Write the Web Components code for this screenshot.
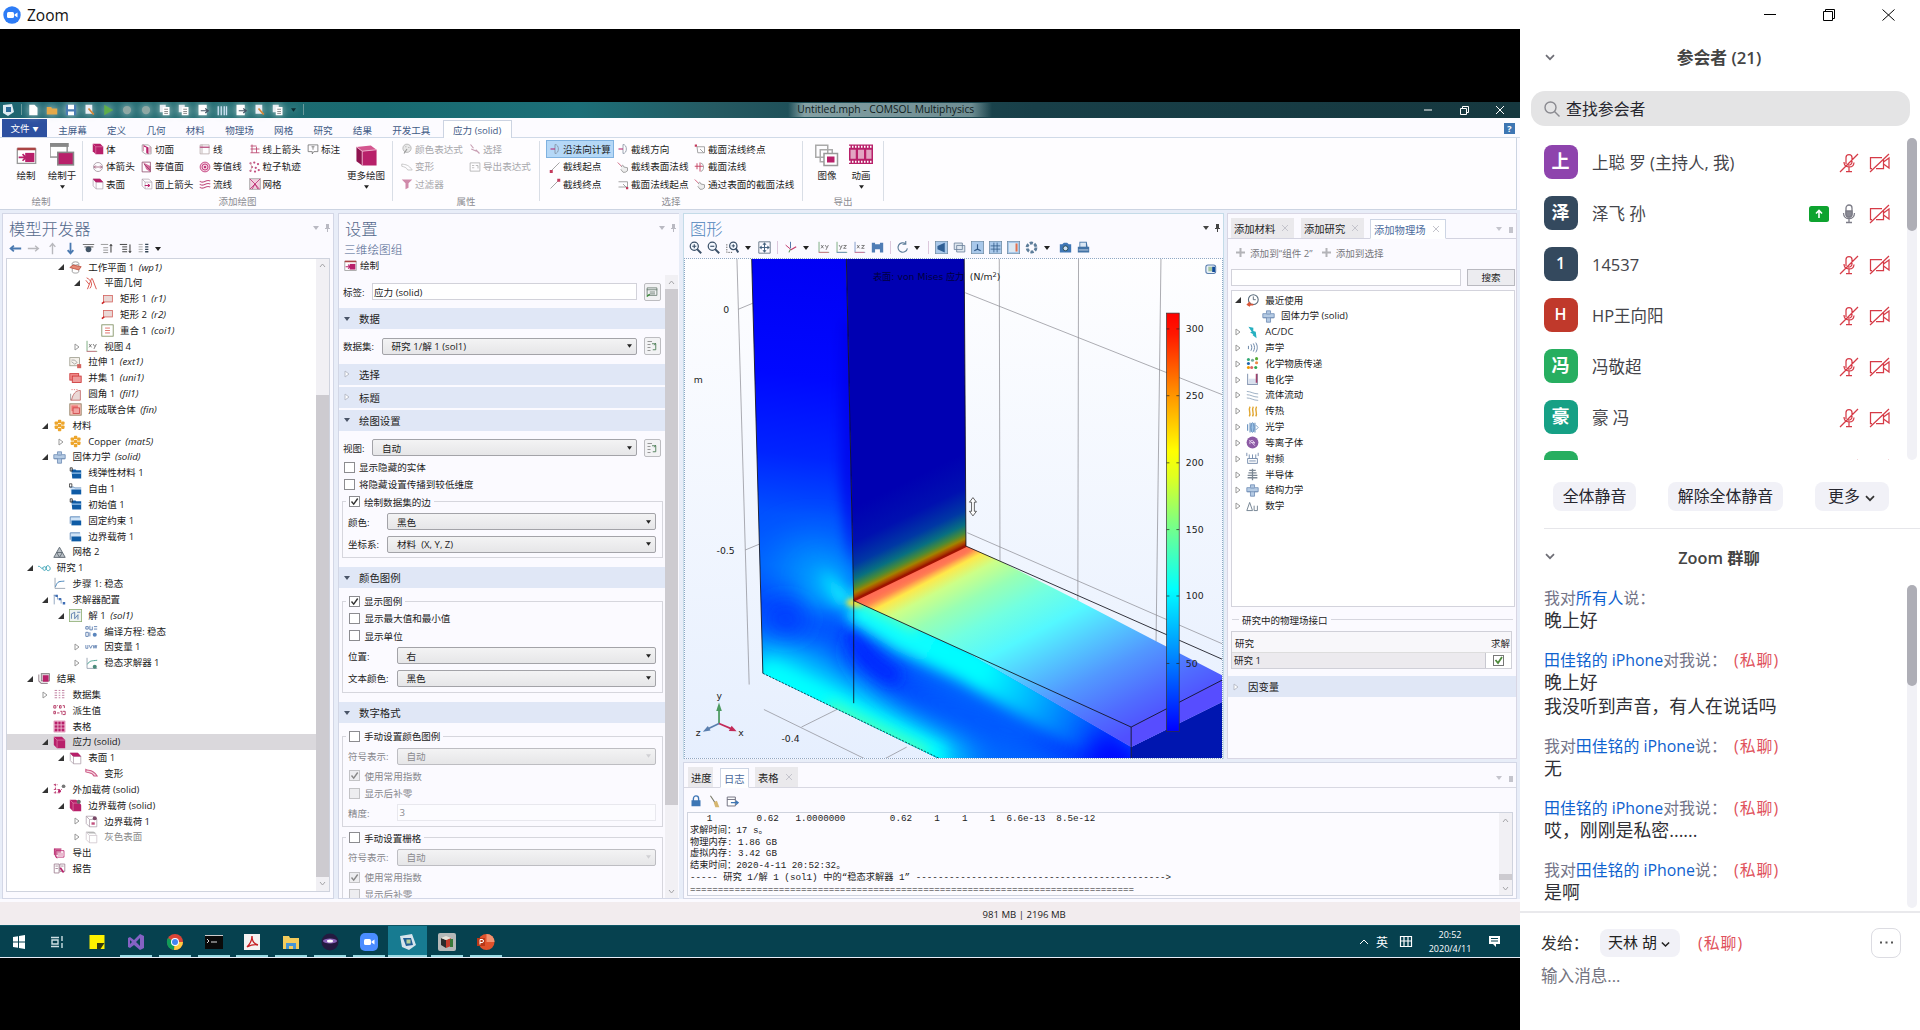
<!DOCTYPE html>
<html lang="zh-CN">
<head>
<meta charset="utf-8">
<title>Zoom</title>
<style>
html,body{margin:0;padding:0;width:1920px;height:1030px;overflow:hidden;background:#fff}
body{font-family:"Open Sans","Noto Sans CJK SC",sans-serif;color:#222}
</style>
</head>
<body>
<zoom-window></zoom-window>
<script>
const M='#b8206a', R='#d06060', B='#3f6fa8', G='#8a8a94';
const P=(d,s=M,w=1,f='none',x='')=>`<path d="${d}" stroke="${s}" stroke-width="${w}" fill="${f}" ${x}/>`;
const F=(d,f=M)=>`<path d="${d}" fill="${f}"/>`;
const CUBE=F('M1 1h10l4 4v10H5L1 11z')+P('M1.5 1.5L5 5h10M5 5v10','#e48ab4',.8);
const BOX=P('M1.5 1.5h9l4 4v9h-9l-4-4zM1.5 1.5l4 4h9M5.5 5.5v9','#a89aa6',.9);
const FOLD='M1 5h5l1 1h8v8H3z';
const SOLID='<path d="M5.500 1h5v3.500H15v5h-4.500V15h-5V9.500H1v-5h4.500z" fill="#b5cbe4" stroke="#6f8db5"/><path d="M1.500 9.500h13M5.500 5h5" stroke="#6f8db5" fill="none"/>';
const MAT=[[3,3],[7,1],[11,3],[3,8],[7,6],[11,8],[7,11]].map(p=>`<rect x="${p[0]-1}" y="${p[1]}" width="4.200" height="4.200" rx="1" fill="#eda52b"/>`).join('');
const ON='<rect x="0" y="0" width="16" height="16" rx="1" fill="#a9c8ea" stroke="#6a8296" stroke-width="1.500"/>';
const ICON={
 wp:P('M4 3v10c0 2.500 8 2.500 8 0V3','#8b8b8b')+'<ellipse cx="8" cy="3" rx="4" ry="2" fill="#fff" stroke="#8b8b8b"/>'+F('M1 8l4-3 10 2-3 4z','#e38a77')+P('M1 8l4-3 10 2-3 4z','#c24f3d'),
 geo:P('M1 4l4 5M3 15L8 2l1 0 5 13M2 1c6 3 8 8 4 13','#d9574f',1.2),
 rect:'<rect x="3" y="3" width="11" height="8" fill="#ead8d6" stroke="#d4645f"/>'+P('M1 13l3-2','#c22',2),
 coin:'<rect x="1" y="1" width="14" height="14" fill="#fff" stroke="#7a8a5a"/>'+P('M5 5h6M5 8h6M5 11h6','#d9574f'),
 xy:P('M2.500 1v13H15','#66a06a')+P('M2 14h12','#d9708a')+P('M5 5l3 4M8 5L5 9M10 5l2 3M14 5l-3 6','#555',.9),
 yz:P('M2.500 1v13H15','#66a06a')+P('M2 14h12','#6a8ac0')+P('M5 5l2 3M9 5l-3 6M10.500 5.500H14L10.500 9H14','#555',.9),
 xz:P('M2.500 1v13H15','#6a8ac0')+P('M2 14h12','#d9708a')+P('M5 5l3 4M8 5L5 9M10.500 5.500H14L10.500 9H14','#555',.9),
 ext:'<rect x="1" y="2" width="12" height="10" fill="#f6f2ec" stroke="#9a9a8a"/>'+P('M3 5h4l3 3-3 2-4-3','#888',.8)+F('M10 10h5v5h-5z','#d4645f'),
 uni:'<rect x="1" y="2" width="11" height="8" fill="#f08b8b" stroke="#c33"/><rect x="4" y="5" width="11" height="8" fill="#ee9a9a" stroke="#c33"/>',
 fil:P('M2 15V7','#8a8a8a')+F('M3 15C5 7 8 3 14 3v12z','#ead8d6')+P('M3 15C5 7 8 3 14 3v12H2','#b55',.9)+P('M3 2l8 0','#d66',1,'none','stroke-dasharray="1.500 1.500"'),
 fin:'<rect x="1" y="1" width="14" height="14" fill="#f6c0b8" stroke="#8a7a5a"/><rect x="3" y="3" width="8" height="7" fill="#e77"/><rect x="5" y="6" width="8" height="7" fill="#f2a2a2" stroke="#c44"/>',
 mat:MAT, solid:SOLID,
 fd:F('M3 3h5l1 1h6v10H4z','#0e5ba5')+P('M3 7.500h12','#bfe0ff',1.2)+P('M1.500 1v4h2.500V1z','#222'),
 fb:F(FOLD,'#d5e6f8')+F('M3 8h12v6H3z','#0e5ba5')+P('M1 5h5l1 1h8','#5a87b8')+P('M.500 1v4h3V1z','#333'),
 fo:F('M2 3h12v6H2z','#cfe3f7')+F('M3 8h12v6H3z','#0e5ba5')+P('M1.500 12V3.500h12','#4a7ab0'),
 mesh:P('M8 1.500L15 14H1zM4.500 8h7L8 14z','#666f78',1.2,'#b9c0c6'),
 study:P('M0 6c2-3 4 4 6 1M6 8c0-3 4-3 4 0s-4 3-4 0M10 8c0-6 5-3 5 0s-4 4-5 0','#36a0b4',1.2),
 step:P('M2.500 1v13H15','#8b98a8')+P('M3 12c3-8 5-6 11-7','#4382b8',1.2),
 cfg:P('M1.500 2v12M1 3h4M5.500 4v4M7 7h3v6','#7f97b5')+F('M3 2h3v3H3zM7 6h3v3H7zM12 11h3v3h-3z','#3d6db5'),
 sol:'<rect x=".500" y=".500" width="15" height="15" fill="#eef3f0" stroke="#8fae74"/>'+P('M3 12V6l4-2v8l4-5v6M10 4h4','#4a6fa6'),
 eq:P('M1 2h3v3H1zM6 1v5h3V2M11 2h4M11 5h4M1 9h3v5H1zM6 9v5','#4a6fa6')+'<circle cx="12" cy="12" r="2.500" fill="#5b86bd"/>',
 uvw:P('M1 5v4h2.500V5M5 5l2 4 2-4M10 5l1 4 1.500-4 1 4 1-4','#4a6fa6',.9),
 ssol:P('M2.500 1v13H15','#8b98a8')+P('M3 9c3-5 5-4 12-5','#3f9a8a',1.1)+'<circle cx="12" cy="12" r="2.500" fill="#4a8a7a"/>',
 res:P('M1 3v8l3 3h8','#9a8a94',1.3)+'<rect x="4" y="2" width="10" height="9" fill="#d9c6d0" stroke="#777"/>'+F('M6 4h7v8H6z'),
 data:P('M2 3h3M2 6h3M2 9h3M2 12h3M7 3h2M7 6h2M7 9h2M7 12h2M11 3h3M11 6h3M11 9h3M11 12h3','#c080a0',1.2),
 num:P('M1 2h2.500v3H1zM5 2h1M8 2h2v3H8zM12 2h2v3M1 9h2v3H1zM5 11h3M9 9h2v4M12 9h3v4h-3','#b8406a',1.2),
 table:F('M1 1h14v14H1z')+P('M1.500 1.500v13h13v-13zM1 6h14M1 10h14M6 1v14M10 1v14','#f3c3d8',1),
 cube:CUBE,
 surf:BOX+F('M1 1h10l4 4.500H5z'),
 def:P('M1 3c4 2 8-1 14 8l-4 0C9 6 5 8 1 6z','#cc5a85',1.3,'#f7d7e3'),
 load:P('M1 2h5M1 8h10M3 1v12M1 12h8','#c2507f',1.3,'none','stroke-dasharray="3 1.500"')+'<circle cx="13" cy="4" r="2.300" fill="#777"/><circle cx="8" cy="10" r="1.800" fill="#b8206a"/>',
 bload:CUBE+'<path d="M8 0h8v8z" fill="#fff"/><circle cx="12" cy="3.500" r="2.500" fill="#666"/>',
 bl1:BOX+'<circle cx="12" cy="4" r="2.500" fill="#7a4a68"/><rect x="8" y="9" width="4" height="3" fill="#c2507f"/>',
 gload:'<g opacity=".6">'+BOX+F('M1 1h10l3 2H5z','#888')+'</g>',
 exp:F('M1 2h9v8H1z','#d88aae')+P('M3.500 4.500h10v8h-10zM1.500 2.500h9M2 2v7l3 5','#b8206a')+F('M6 7h7v4H6z','#e9b9ce'),
 rep:P('M1.500 2.500h6v11h-6zM8.500 2.500h6v9h-6zM3 5h3M3 8h3M10 5h3','#9a7a8c')+P('M9 7l4 6','#b8206a',2),
 draw:'<rect x="1" y="3" width="14" height="11" fill="#fff" stroke="#999"/>'+F('M1 2h14v2H1z','#a44')+F('M7 6h7v7H7z')+P('M2 9.500h5M5 7l2.500 2.500L5 12',M,1.3),
 drawto:'<rect x="0" y="1" width="11" height="8" fill="#fff" stroke="#999"/>'+F('M0 0h12v2.500H0z','#888')+'<rect x="5" y="6" width="10" height="8" fill="#b8206a" stroke="#888"/>',
 slice:P('M1.500 2.500h8l4 3v9h-8l-4-3z','#999')+F('M4 3l6 3v9l-3-2V6l-3-1z')+P('M3 2v9M12 5v8','#c2507f'),
 line:P('M1.500 2.500h12v12h-12zM4 2v12M2 6h12','#a99',.9)+P('M1 5.500h13','#b8206a',1.2),
 larrow:P('M2 4h8M2 8h12M2 13h12M4 2v11M10 5v8','#b8406a',1.1),
 ann:P('M1.500 2.500h13v9H9l-2 3v-3H1.500zM6 5h4M8 5v4','#666'),
 varrow:'<circle cx="8" cy="8" r="6" fill="none" stroke="#9a8a94"/>'+P('M3 8h10M5 6L3 8l2 2M11 6l2 2-2 2','#a05a7a',1.1),
 iso:F('M3 2l10 5v8l-6-4z','#d76c9c')+P('M1.500 1.500h11v13h-11zM4 4l8 8','#884466'),
 contour:'<circle cx="8" cy="8" r="6.500" fill="#f3cfdf" stroke="#b8206a"/><circle cx="8" cy="8" r="4" fill="none" stroke="#b8206a"/><circle cx="8" cy="8" r="1.500" fill="#b8206a"/>',
 part:[[2,3],[7,2],[12,4],[4,8],[9,9],[2,13],[8,14],[13,12]].map(p=>`<circle cx="${p[0]}" cy="${p[1]}" r="1.500" fill="#c2507f"/>`).join('')+P('M2 3l2 5-2 5','#caa'),
 sarrow:BOX+P('M5 10h7M9 8l3 2-3 2',M,1.3),
 stream:P('M1 4c4 5 8-3 14 0M1 8c4 5 8-3 14 0M1 12c4 5 8-3 14 0','#c2507f',1.4),
 gmesh:'<rect x="1" y="1" width="14" height="14" fill="#f0d0de" stroke="#999"/>'+P('M1 1l7 7 7-7M8 8l-7 7M8 8l6 7M4 15l4-7 4 7',M),
 pal:'<circle cx="8" cy="7" r="5.500" fill="#e8e8e8" stroke="#aaa"/>'+P('M6 5h1M10 6h1M4 14l4-6','#999',1.5),
 sel:P('M2 2l4 5M3 8l7 3M9 9l5 5','#c9a0b4',1.6), defg:P('M1 4c6 1 9 1 14 8H9C7 8 4 8 1 7z','#bbb'),
 oute:P('M1.500 2.500h13v11h-13zM4 6h3M4 9h3M9 6h3v4','#aaa'),
 filt:F('M1 2h14l-5 5v6l-4 2V7z','#d08aaa'),
 nrm:P('M8 2c6 0 6 12 0 12M8 2v12','#7d8a9a')+P('M2 8h6',M,1.4),
 l1:P('M3 13L14 2','#888')+F('M1 12h4v4H1z','#c33a5c'), l2:P('M2 14L13 3','#888')+F('M11 1h4v4h-4z','#c33a5c'),
 hand:P('M1 2l7 7','#c33a5c')+P('M6 8c0-3 3-3 3 0l5 1v4l-3 2H8l-3-4','#888',1,'#eee'),
 pl:P('M2 5h12v7H2M8 8l5 5','#888')+F('M12 12h3v3h-3z','#c33a5c'), pl2:P('M4 5h10v8H5zM8 8l5 5','#888')+F('M1 2h3v3H1z','#c33a5c'),
 cn:P('M9 3c5 0 5 10 0 11','#888')+P('M1 7h11M4 3v8M8 2v12','#c33a5c',1.2),
 more:F('M1 2l10-1 4 3-10 1z','#d4568f')+F('M1 2l4 3v10l-4-3z','#8f1450')+F('M5 5l10-1v11H5z')+P('M1 2l4 3 10-1M5 5v10','#f0b6d0',.6),
 img:P('M.500 1.500h8v8h-8zM3.500 4.500h8v8h-8z','#aaa')+'<rect x="6" y="7" width="9" height="8" fill="#fff" stroke="#999"/>'+F('M8 9h5v4H8z'),
 film:F('M0 1h16v13H0z')+P('M0 2.500h16M0 12.500h16','#fff',1.3,'none','stroke-dasharray="1 1"')+F('M1 4.500h3.500v6H1zM6 4.500h4v6H6zM11.500 4.500H15v6h-3.500z','#e2a5c2'),
 al:P('M15 8H2M6 4.500L2 8l4 3.500','#4a79b0',2.2), ar:P('M1 8h13M10 4.500L14 8l-4 3.500','#b8b8bd',1.7),
 au:P('M8 15V2M4.500 6L8 2l3.500 4','#b8b8bd',1.7), ad:P('M8 1v13M4.500 10L8 14l3.500-4','#4a79b0',2.2),
 eye:P('M1 3h14M3 6h11','#777',1.3)+'<circle cx="8" cy="9" r="3.500" fill="#456"/>',
 lu:P('M1 3h9M4 7h6M4 10h6M4 13h6','#888')+P('M13.500 13V3M12 5l1.500-2L15 5','#333',1.2),
 ld:P('M1 3h9M4 6h6M4 9h6M4 12h6','#444',1.2)+P('M13.500 3v10M12 11l1.500 2 1.500-2','#333',1.2),
 cols:P('M2 3h5M2 6h5M2 9h5M2 12h5','#aaa',1.2)+P('M10 3h4M10 6h4M10 9h4M10 12h4','#345',1.6),
 zi:'<circle cx="6.500" cy="6.500" r="5" fill="#f4f8ff" stroke="#3a4f68" stroke-width="1.500"/>'+P('M10 10l5 5','#3a4f68',2.4)+P('M4 6.500h5M6.500 4v5','#3a4f68',1.4),
 zo:'<circle cx="6.500" cy="6.500" r="5" fill="#f4f8ff" stroke="#3a4f68" stroke-width="1.500"/>'+P('M10 10l5 5','#3a4f68',2.4)+P('M4 6.500h5','#3a4f68',1.4),
 zb:P('M1 4v10h8','#555',1.2,'none','stroke-dasharray="1.500 1.500"')+'<circle cx="9" cy="6" r="4.500" fill="#f4f8ff" stroke="#3a4f68" stroke-width="1.500"/>'+P('M12 9l3 5','#3a4f68',2.4)+P('M7 6h4M9 4v4','#3a4f68',1.2),
 ze:P('M1 1h14v14H1z','#6d7c8c',1.2)+P('M8 3v10M3 8h10','#44617e',1.2)+F('M8 1.500l2.500 3h-5zM8 14.500l2.500-3h-5zM1.500 8l3-2.500v5zM14.500 8l-3-2.500v5z','#44617e'),
 ax:P('M8 9V1','#5577aa',1.3)+P('M8 10l-6-5','#c33a6c',1.2)+P('M8 11l7-4','#c33a6c',1.4)+P('M8 10l-2 4','#5a9a5a',1.3),
 cyl:F('M1 2h4v12H1zM11 2h4v12h-4zM5 4h6v6H5z','#4f7db5'),
 rot:P('M12 3.500A5.800 5.800 0 1 0 14 9M12 0v4H8','#5d7d9a',1.4),
 spk:ON+F('M3 6l9-4v12L3 10z','#2f5f95'), trans:P('M1.500 2.500h10v8h-10zM4.500 5.500h10v8h-10z','#6a7f9a',1,'#dfe7f0'),
 axa:ON+P('M8 10V4M8 10l-4 2M8 10l4 2','#345c8a',1.4), grid:ON+P('M2 6h12M2 10h12M6 2v12M10 2v12','#345c8a'),
 leg:ON+F('M2.500 2.500h11v11h-11z','#dde9f4')+F('M10.500 3h2.500v10h-2.500z','#e07050'),
 ref:'<circle cx="8" cy="8" r="5.500" fill="none" stroke="#5d7d9a" stroke-width="3.500" stroke-dasharray="4 1.760"/>',
 cam:F('M1 4h3l2-2h4l2 2h3v10H1z','#3f76b5')+'<circle cx="8" cy="9" r="3" fill="#cfe0f2" stroke="#244"/>',
 prn:F('M3 1h9l1 6h2v7H1V7h2z','#4373a6')+F('M4 2h7v5H4z','#dce8f4')+P('M2 11h12','#dce8f4'),
 clock:'<circle cx="9" cy="7" r="6" fill="#fff" stroke="#556878" stroke-width="1.300"/>'+P('M9 3v4h3','#456')+P('M9 13H2M5 10l-3 3 3 2','#d9573a',2),
 acdc:F('M3 1l6 1 0 4 3 1 1 8-5-4 1-1-4-2 2-1z','#26b0c0'),
 snd:P('M3 6v4M6 4c1.500 3 1.500 5 0 8M9 3c2 4 2 6 0 10M12 2c2.500 4 2.500 8 0 12','#6a86a8',1.2),
 chem:[[3,3,'#3a7'],[8,4,'#7a9'],[13,2,'#5a3'],[13,7,'#e84'],[3,8,'#26a'],[7,13,'#d66'],[3,13,'#e90'],[12,13,'#3a5']].map(p=>`<circle cx="${p[0]}" cy="${p[1]}" r="1.900" fill="${p[2]}"/>`).join(''),
 elec:P('M2 1v13h12V1','#8a9ab5',1.3)+F('M3 7h10v6H3z','#d8e0ee')+P('M13 1v11','#a0406a',2),
 flow:P('M1 3c5 0 8 3 14 3M1 7c5 0 8 3 14 3M1 11c5 0 8 3 14 3','#8aa0b8'),
 heat:P('M4 14c3-4-2-7 1-12M8 14c3-4-2-7 1-12M12 14c3-4-2-7 1-12','#e0a52e',1.7),
 opt:P('M2 4v8M5 2v12M11 2v12','#6a94c0',1.4)+'<ellipse cx="8" cy="8" rx="2" ry="6" fill="#9ec3e6" stroke="#4a7ab0"/>'+P('M12 5l3 3-3 3','#6a94c0'),
 plas:'<circle cx="8" cy="8" r="7.300" fill="#8c5aa4"/>'+P('M5 10c-2-6 6-6 5 0M6 8h5M4 5l7 7','#e5d2ee',1.1),
 rf:P('M2 8h12v6H2zM4 8V3M8 8V3M12 8V3M1 1v4M15 1v4M4 11h8','#6f87a8',1.1),
 semi:P('M2 9h12M2 12h12M8 1v14M4 3h8M3 6h10','#7b8794',1.6),
 math:P('M1 13L4.500 3 8 13z','#6a7a8a',1.1)+P('M10 7v6h4V7','#6a7a8a',1.1),
 lock:F('M2 7h12v8H2z','#3d76b5')+P('M4.500 8V5c0-5 7-5 7 0v3','#3d76b5',1.8), broom:P('M3 1l6 9','#776',1.3)+F('M7 9l4-2 3 8H9z','#d6b670'),
 outp:P('M1.500 2.500h10v11h-10zM1.500 5.500h10','#667',1.1,'#fff')+P('M6 9.500h9M12 7l3 2.500-3 2.500','#3d76b5',1.5),
 lab:P('M1.500 2.500h13v10h-13zM1 5h14M5 8h7M5 10.500h7','#586f62',1)+P('M1 14l4-3','#3a8a3a',2),
 go:P('M2 2h6M2 6h4M2 10h4M2 14h4','#777')+P('M8 5h5v8H9M11 7l2-3','#4c7c56',1.2),
 newf:F('M3 1h7l4 4v10H3z','#fff'), open:F('M1 4h6l1 2h7v8H1z','#e5a94a'), save:F('M1 1h14v14H1z','#4b7cb3')+F('M4 1h8v6H4zM4 10h8v5H4z','#fff'),
 savea:F('M2 1h9v12H2z','#e9eef5')+P('M6 6l7 8','#d9893a',2.5), run:F('M3 1l12 7-12 7z','#5fae4a'), dot:'<circle cx="8" cy="8" r="5.500" fill="#8fa8a4"/>',
 copy:F('M1 1h8v10H1z','#e8eef2')+F('M5 4h9v11H5z','#fff')+P('M7 7h5M7 10h5M7 12.500h5','#666'), arrw:F('M2 1h11v14H2z','#fff')+P('M5 9h10M11 6l4 3-4 3','#456',1.6),
 del:P('M3 3v12M7 3v12M11 3v12M14 3v12','#cde3f5',1.8)
};
const svg=(n,w=12.5,h=w)=>`<svg width="${w}" height="${h}" viewBox="0 0 16 16" style="display:block;flex:none">${ICON[n]||''}</svg>`;
const BASE=`*{box-sizing:border-box}:host{display:block}.r{display:flex;align-items:center}`;
function define(tag,fn){
 customElements.define(tag,class extends HTMLElement{
  connectedCallback(){ if(this.shadowRoot) return;
   const s=this.attachShadow({mode:'open'});const t=document.createElement('template');
   t.innerHTML=fn(this,(k,d='')=>this.getAttribute(k)??d);
   s.appendChild(t.content.cloneNode(true)); }
 });
}
const st=c=>`<style>${BASE}${c}</style>`;
const caret=(c='#222',w=6)=>`<svg width="${w}" height="4" viewBox="0 0 6 4" style="display:block;flex:none"><path d="M0 0h6L3 4z" fill="${c}"/></svg>`;

define('tree-row',(e,a)=>{
 const L=+a('level'),o=a('open'),x=88.3+(L-3)*15.83-7-30;
 const g=o==='1'?'<svg width="6" height="6" viewBox="0 0 6 6"><path d="M6 0v6H0z" fill="#333"/></svg>':o==='0'?'<svg width="6" height="8" viewBox="0 0 6 8"><path d="M1 1l4 3-4 3z" fill="#fff" stroke="#999"/></svg>':'';
 return st(`:host{height:15.834px;${a('sel')?'background:#dad8dc;':''}font-size:9.5px;line-height:15.800px;color:${a('dim')?'#8b8b8b':'#1a1a1a'};white-space:pre}
 .r{height:100%;padding-left:${+a('pad',0)+x}px}.a{width:9.500px;display:flex;align-items:center}.i{width:20.500px;padding-left:1.500px}::slotted(i){font-size:9.700px;margin-left:2px}`)+
 `<div class="r"><span class="a">${g}</span><span class="i">${svg(a('icon'),13)}</span><span><slot></slot></span></div>`;
});
define('scroll-bar',(e,a)=>{
 const c=d=>`<svg width="7" height="5" viewBox="0 0 7 5"><path d="${d}" fill="none" stroke="#a5a5a8"/></svg>`;
 return st(`:host{width:13px;flex:none;background:#f1f0f4}.w{height:100%;display:flex;flex-direction:column;align-items:center}.b{height:14px;display:flex;align-items:center}.t{width:13px;background:#cdcbd0;height:${a('size')}px;margin-top:${a('off',0)}px}.s{flex:1}`)+
 `<div class="w"><div class="b">${c('M1 4l2.500-3L6 4')}</div><div class="t"></div><div class="s"></div><div class="b">${c('M1 1l2.500 3L6 1')}</div></div>`;
});
define('panel-title',(e,a)=>st(`:host{height:29px;font-size:16.300px;color:${a('color','#54698c')};font-weight:300}.r{height:28.500px;padding:0 3px 0 ${a('pad','7')}px;justify-content:space-between}.p{display:flex;gap:6.500px;align-items:center}`)+
 `<div class="r"><span><slot></slot></span><span class="p">${caret(a('c','#b9b9c2'))}<svg width="5" height="8" viewBox="0 0 5 8"><path d="M1 0h3v4h1v1H0V4h1zM2 5h1v3H2z" fill="${a('c','#b9b9c2')}"/></svg></span></div>`);
define('section-head',(e,a)=>st(`:host{height:21px;background:#e0e7f6;margin-top:${a('mt','0')}px;font-size:10.400px;color:#222}.r{height:21px;padding-left:5px;gap:9px}.z{width:6px;display:flex}`)+
 `<div class="r"><span class="z">${a('open')?caret('#4a5568'):'<svg width="6" height="8" viewBox="0 0 6 8"><path d="M1 1l4 3-4 3z" fill="#fff" stroke="#b8bcc8"/></svg>'}</span><span><slot></slot></span></div>`);
define('combo-box',(e,a)=>st(`:host{flex:1;height:17px;font-size:9.600px}.r{height:17px;border:1px solid ${a('dim')?'#bdbdc2':'#a3a3a8'};border-radius:2px;background:linear-gradient(#f3f3f4,#e6e6e8);padding:0 4px 0 9px;justify-content:space-between;color:${a('dim')?'#8a8a8e':'#222'}}span{white-space:pre}`)+
 `<div class="r"><span><slot></slot></span>${caret(a('dim')?'#d0d0d4':'#222',5)}</div>`);
define('text-box',(e,a)=>st(`:host{flex:1;height:17px;font-size:9.600px}.r{height:17px;border:1px solid ${a('dim')?'#e8e8ee':'#d2d2da'};background:${a('dim')?'#fcfcff':'#fff'};padding-left:${a('pad','1')}px;color:${a('dim')?'#8a8a8e':'#222'}}`)+`<div class="r"><slot></slot></div>`);
define('icon-button',(e,a)=>st(`:host{width:16.500px;height:18px;flex:none}.r{height:18px;justify-content:center;border:1px solid #bcbcc0;border-radius:2px;background:#f2f2f4}`)+`<div class="r">${svg(a('icon'),12)}</div>`);
define('form-row',(e,a)=>st(`:host{height:${a('h','22.300')}px;padding:${a('pt','0')}px ${a('pr','6')}px 0 ${a('pl','5.500')}px;font-size:9.500px;color:${a('dim')?'#87878c':'#222'}}.r{height:100%}.l{width:${a('lw')}px;flex:none;white-space:nowrap}.c{flex:1;display:flex;align-items:center;gap:7px}`)+
 `<div class="r"><span class="l">${a('label')}:</span><span class="c"><slot></slot></span></div>`);
define('check-box',(e,a)=>st(`:host{height:17.200px;padding-left:${a('pl','0')}px;font-size:9.550px;color:${a('dim')?'#87878c':'#222'}}.r{height:100%;gap:4.500px;white-space:nowrap}svg{display:block;flex:none}`)+
 `<div class="r"><svg width="11" height="11" viewBox="0 0 11 11"><rect x=".500" y=".500" width="10" height="10" fill="${a('dim')?'#ededf0':'#fff'}" stroke="${a('dim')?'#c3c3c6':'#8c8c90'}"/>${a('on')?`<path d="M2.500 5.500l2.200 2.700L8.700 2.500" fill="none" stroke="${a('dim')?'#888':'#333'}" stroke-width="1.400"/>`:''}</svg><span><slot></slot></span></div>`);
define('group-box',(e,a)=>st(`:host{margin:${a('mt','0')}px 2px 0 2.500px}fieldset{margin:0;padding:0 0 ${a('pb','2')}px;border:1px solid #d6d6dd;min-width:0}legend{margin-left:3px;padding:0 3px;height:17.200px}`)+
 `<fieldset><legend><slot name="legend"></slot></legend><slot></slot></fieldset>`);

define('ribbon-item',(e,a)=>st(`:host{height:17.500px;font-size:9.600px;line-height:17px;color:${a('dim')?'#a8a8ac':'#1c1c1c'};white-space:nowrap}.r{height:16px;gap:2px;${a('sel')?'background:#b5d8f7;outline:1px solid #7fb2e0;width:66px;margin-left:-2px;padding-left:2px':''}}`)+
 `<div class="r">${svg(a('icon'),12)}<span><slot></slot></span></div>`);
define('ribbon-big',(e,a)=>st(`:host{width:${a('w','36')}px;font-size:9.500px;color:#1c1c1c}.c{display:flex;flex-direction:column;align-items:center;white-space:nowrap}.i{height:24px;margin-top:2px;display:flex;align-items:center}.l{line-height:14px;margin-top:2px}.k{margin-top:2px;height:4px}`)+
 `<div class="c"><div class="i">${svg(a('icon'),a('s','21'))}</div><div class="l"><slot></slot></div><div class="k">${a('drop')?caret('#222',5):''}</div></div>`);
define('ribbon-group',(e,a)=>st(`:host{width:${a('w')}px;flex:none;height:71px;padding-top:3px}.c{height:52px;display:flex;padding-left:${a('pl','0')}px}.o{height:60px;border-right:1px solid #d9dee6;margin-top:2px}.l{height:12px;line-height:12px;margin-top:2.500px;text-align:center;color:#8c8c92;font-size:9.500px}.in{margin-top:-2px}.g{display:grid;grid-template-columns:${a('cols')};grid-auto-flow:column;grid-template-rows:repeat(3,17.500px)}`)+
 `<div class="o"><div class="c in"><slot name="lead"></slot><div class="g"><slot></slot></div><slot name="tail"></slot></div><div class="l">${a('label')}</div></div>`);

define('title-strip',()=>{
 const ic=['newf','open','save','savea','run','dot','dot','copy','copy','arrw','del','arrw','savea','copy'];
 return st(`:host{height:15.500px}.r{height:15.500px;background:linear-gradient(90deg,#1d6470,#246c72 10%,#186a70 25%,#1c6f78 38%,#255a62 47%,#1f5059 52%,#183f48 68%,#16383f)}
 .q{display:flex;align-items:center;margin-left:7px;gap:6.900px}.q svg{filter:drop-shadow(0 0 4px #d5e6e4)}.lg{width:16px;margin-right:1px;margin-left:-7px}.s{width:1px;height:11px;background:#6a9a9c}
 .t{margin-left:484px;width:204px;font-size:10.300px;line-height:13px;height:14px;padding-left:9px;white-space:nowrap;background:linear-gradient(90deg,#7f9a9e00,#84a0a4 8%,#6e8d92 90%,#7f9a9e00);color:#101c20}
 .w{margin-left:auto;display:flex;gap:26px;padding-right:15px}`)+
 `<div class="r"><svg class="lg" width="16" height="14" viewBox="0 0 16 14" style="margin-left:0"><path d="M3 2l9-1 2 8-6 4-5-3z" fill="#dcebf2"/><path d="M6 4h5v5H6z" fill="#2c6c9a"/></svg><div class="q"><span class="s" style="margin-right:-2px;margin-left:-3px"></span>${ic.map(i=>svg(i,12)).join('')}${caret('#0c2a30',5)}<span class="s"></span></div><div class="t">Untitled.mph - COMSOL Multiphysics</div>
 <div class="w"><svg width="10" height="10"><path d="M1 5h8" stroke="#fff"/></svg><svg width="10" height="10"><path d="M1.500 3.500h6v6h-6zM3.500 3V1.500h6v6H8" stroke="#fff" fill="none"/></svg><svg width="10" height="10"><path d="M1 1l8 8M9 1L1 9" stroke="#fff"/></svg></div></div>`;
});
define('ribbon-bar',()=>{
 const it=(i,t,x='')=>`<ribbon-item icon="${i}" ${x}>${t}</ribbon-item>`;
 return st(`:host{height:92.500px;background:#fcfbff}.tabs{height:20.500px;display:flex;align-items:stretch;font-size:9.550px;color:#3f5a86;border-bottom:1px solid #d0dae8}
 .f{width:45px;margin:1.500px 0 0 2px;background:#2d50a0;color:#fff;display:flex;align-items:center;justify-content:center;gap:3px}.n{display:flex;align-items:center;margin-left:1px;white-space:nowrap}.n span{padding:5px 10.150px 0}.n .ac{height:18.500px;margin-top:2px;padding:1px 8px 0 9px;margin-left:2.500px;border:1px solid #ccd4e2;border-bottom:0;background:#fff;display:flex;align-items:center;width:69px;margin-bottom:-1px}
 .q{margin:5px 5px 0 auto;width:11px;height:11px;background:#3e76b3;color:#fff;font:bold 9px/11px "Open Sans";text-align:center}
 .g{display:flex;height:72px;margin-right:3px;border-right:1px solid #ccd4e2;border-bottom:1px solid #ccd4e2;background:#fefdff}`)+
 `<div class="tabs"><div class="f">文件<span style="font-size:6px">▼</span></div><div class="n"><span>主屏幕</span><span>定义</span><span>几何</span><span>材料</span><span>物理场</span><span>网格</span><span>研究</span><span>结果</span><span>开发工具</span><span class="ac">应力 (solid)</span></div><div class="q">?</div></div>
 <div class="g">
 <ribbon-group w="83" label="绘制" pl="8"><ribbon-big slot="lead" icon="draw">绘制</ribbon-big><ribbon-big slot="lead" icon="drawto" s="25" drop="1">绘制于</ribbon-big></ribbon-group>
 <ribbon-group w="310" label="添加绘图" pl="9" cols="49px 58px 49.500px 58.500px 40px">${it('cube','体')+it('varrow','体箭头')+it('surf','表面')+it('slice','切面')+it('iso','等值面')+it('sarrow','面上箭头')+it('line','线')+it('contour','等值线')+it('stream','流线')+it('larrow','线上箭头')+it('part','粒子轨迹')+it('gmesh','网格')+it('ann','标注')}<ribbon-big slot="tail" icon="more" s="23" drop="1" w="38">更多绘图</ribbon-big></ribbon-group>
 <ribbon-group w="147" label="属性" pl="8" cols="68px 70px">${it('pal','颜色表达式','dim="1"')+it('defg','变形','dim="1"')+it('filt','过滤器','dim="1"')+it('sel','选择','dim="1"')+it('oute','导出表达式','dim="1"')}</ribbon-group>
 <ribbon-group w="263" label="选择" pl="9" cols="68px 77px 100px">${it('nrm','沿法向计算','sel="1"')+it('l1','截线起点')+it('l2','截线终点')+it('nrm','截线方向')+it('hand','截线表面法线')+it('pl','截面法线起点')+it('pl2','截面法线终点')+it('cn','截面法线')+it('hand','通过表面的截面法线')}</ribbon-group>
 <ribbon-group w="81" label="导出" pl="7"><ribbon-big slot="lead" w="34" icon="img" s="24">图像</ribbon-big><ribbon-big slot="lead" w="34" icon="film" s="24" drop="1">动画</ribbon-big></ribbon-group></div>`;
});
define('model-builder',()=>{
 const T=[[3,1,'wp','工作平面 1 <i>(wp1)</i>'],[4,1,'geo','平面几何'],[5,'','rect','矩形 1 <i>(r1)</i>'],[5,'','rect','矩形 2 <i>(r2)</i>'],[5,'','coin','重合 1 <i>(coi1)</i>'],[4,0,'xy','视图 4'],[3,'','ext','拉伸 1 <i>(ext1)</i>'],[3,'','uni','并集 1 <i>(uni1)</i>'],[3,'','fil','圆角 1 <i>(fil1)</i>'],[3,'','fin','形成联合体 <i>(fin)</i>'],[2,1,'mat','材料'],[3,0,'mat','Copper <i>(mat5)</i>'],[2,1,'solid','固体力学 <i>(solid)</i>'],[3,'','fd','线弹性材料 1'],[3,'','fb','自由 1'],[3,'','fd','初始值 1'],[3,'','fo','固定约束 1'],[3,'','fo','边界载荷 1'],[2,'','mesh','网格 2'],[1,1,'study','研究 1'],[2,'','step','步骤 1: 稳态'],[2,1,'cfg','求解器配置'],[3,1,'sol','解 1 <i>(sol1)</i>'],[4,'','eq','编译方程: 稳态'],[4,0,'uvw','因变量 1'],[4,0,'ssol','稳态求解器 1'],[1,1,'res','结果'],[2,0,'data','数据集'],[2,'','num','派生值'],[2,'','table','表格'],[2,1,'cube','应力 (solid)','sel="1"'],[3,1,'surf','表面 1'],[4,'','def','变形'],[2,1,'load','外加载荷 (solid)'],[3,1,'bload','边界载荷 (solid)'],[4,0,'bl1','边界载荷 1'],[4,0,'gload','灰色表面','dim="1"'],[2,'','exp','导出'],[2,'','rep','报告']];
 return st(`:host{width:332px;flex:none;border:1px solid #d3d7e6;background:#fbfaff}.b{height:14px;display:flex;gap:5.300px;align-items:center;padding-left:6px}.t{margin:0.500px 3px 0;height:634px;border:1px solid #cfd3de;background:#fff;display:flex}.l{flex:1;padding-top:1px}`)+
 `<panel-title pad="6">模型开发器</panel-title><div class="b" style="margin-top:-3px;height:17px">${['al','ar','au','ad','eye','lu','ld','cols'].map(i=>svg(i,13)).join('')}${caret('#222')}</div><div class="t"><div class="l">${T.map(r=>`<tree-row level="${r[0]}" open="${r[1]}" icon="${r[2]}" ${r[4]||''}>${r[3]}</tree-row>`).join('')}</div><scroll-bar size="482" off="123"></scroll-bar></div>`;
});
define('settings-panel',()=>st(`:host{width:341px;flex:none;border:1px solid #d3d7e6;border-right:0;background:#fbfaff;overflow:hidden}.s{height:12px;line-height:12px;font-size:11.700px;color:#4a628c;padding-left:5px;font-weight:300}.d{height:20px;padding-left:5px;gap:3px;font-size:9.600px}.b{display:flex;height:623.500px}.c{width:326px;flex:none;overflow:hidden}.k{display:block;padding-left:5.500px}`)+
 `<panel-title pad="6">设置</panel-title><div class="s">三维绘图组</div><div class="r d">${svg('draw',13)}<span>绘制</span></div>
 <div class="b"><div class="c">
 <form-row h="33" pl="4" pr="4.500" lw="29" label="标签"><text-box>应力 (solid)</text-box><icon-button icon="lab"></icon-button></form-row>
 <section-head open="1">数据</section-head>
 <form-row h="34.500" pl="4" pr="4.500" lw="38.500" label="数据集"><combo-box>研究 1/解 1 (sol1)</combo-box><icon-button icon="go"></icon-button></form-row>
 <section-head>选择</section-head><section-head mt="2">标题</section-head><section-head mt="2" open="1">绘图设置</section-head>
 <form-row h="28" pt="6" pl="4" pr="4.500" lw="29" label="视图"><combo-box>自动</combo-box><icon-button icon="go"></icon-button></form-row>
 <check-box pl="4.500">显示隐藏的实体</check-box><check-box pl="4.500">将隐藏设置传播到较低维度</check-box>
 <group-box mt=".500"><check-box slot="legend" on="1">绘制数据集的边</check-box><form-row lw="39" label="颜色"><combo-box>黑色</combo-box></form-row><form-row lw="39" label="坐标系"><combo-box>材料  (X, Y, Z)</combo-box></form-row></group-box>
 <section-head mt="9" open="1">颜色图例</section-head>
 <group-box mt="4.500"><check-box slot="legend" on="1">显示图例</check-box><check-box pl="6.500">显示最大值和最小值</check-box><check-box pl="6.500">显示单位</check-box><form-row lw="48.500" label="位置" h="23"><combo-box>右</combo-box></form-row><form-row lw="48.500" label="文本颜色"><combo-box>黑色</combo-box></form-row></group-box>
 <section-head mt="9.500" open="1">数字格式</section-head>
 <group-box mt="4.800"><check-box slot="legend">手动设置颜色图例</check-box><form-row dim="1" lw="48.500" label="符号表示"><combo-box dim="1">自动</combo-box></form-row><check-box dim="1" on="1" pl="6.500">使用常用指数</check-box><check-box dim="1" pl="6.500">显示后补零</check-box><form-row dim="1" lw="48.500" label="精度"><text-box dim="1" pad="2">3</text-box></form-row></group-box>
 <group-box mt="2"><check-box slot="legend">手动设置栅格</check-box><form-row dim="1" lw="48.500" label="符号表示"><combo-box dim="1">自动</combo-box></form-row><check-box dim="1" on="1" pl="6.500">使用常用指数</check-box><check-box dim="1" pl="6.500">显示后补零</check-box></group-box>
 </div><scroll-bar size="516"></scroll-bar></div>`);

define('plot-canvas',()=>{
 const ln=(d,c='#8a8a90',w=2,x='')=>`<path d="${d}" stroke="${c}" stroke-width="${w}" fill="none" ${x}/>`;
 const tick=[[300,325],[250,515],[200,706],[150,896],[100,1085],[50,1277]];
 const blur=(id,s)=>`<filter id="${id}" filterUnits="userSpaceOnUse" x="-100" y="0" width="1900" height="1900"><feGaussianBlur stdDeviation="${s}"/></filter>`;
 return st(`:host{height:501px;width:539px;border:1px dotted #8fa8c4}svg{display:block}text{font-family:"DejaVu Sans",sans-serif;font-size:26.500px;fill:#222}`)+
 `<svg width="537" height="499" viewBox="13 126 1531 1420" preserveAspectRatio="none"><defs>
 <linearGradient id="bg" x1="0" y1="0" x2="0" y2="1"><stop offset="0" stop-color="#fefeff"/><stop offset="1" stop-color="#e6effe"/></linearGradient>
 <linearGradient id="fr" gradientUnits="userSpaceOnUse" x1="410" y1="124" x2="290" y2="1250"><stop offset="0" stop-color="#0000f4"/><stop offset=".300" stop-color="#0008ff"/><stop offset=".500" stop-color="#0024ff"/><stop offset=".650" stop-color="#0050ff"/><stop offset=".780" stop-color="#0060ff"/><stop offset=".880" stop-color="#0048ff"/><stop offset="1" stop-color="#0060ff"/></linearGradient>
 <linearGradient id="cl" gradientUnits="userSpaceOnUse" x1="654" y1="1020" x2="549" y2="804"><stop offset="0" stop-color="#901400"/><stop offset=".040" stop-color="#b04800"/><stop offset=".080" stop-color="#a08400"/><stop offset=".140" stop-color="#488a38"/><stop offset=".230" stop-color="#087080"/><stop offset=".380" stop-color="#0038a4"/><stop offset=".620" stop-color="#0010b0"/><stop offset="1" stop-color="#0000b2"/></linearGradient>
 <linearGradient id="tp" gradientUnits="userSpaceOnUse" x1="654" y1="1020" x2="980" y2="1640"><stop offset="0" stop-color="#ff6048"/><stop offset=".035" stop-color="#ff8a50"/><stop offset=".065" stop-color="#ffe84a"/><stop offset=".120" stop-color="#ccff88"/><stop offset=".210" stop-color="#98ffb4"/><stop offset=".320" stop-color="#72ffe0"/><stop offset=".450" stop-color="#54f8ff"/><stop offset=".570" stop-color="#54ccff"/><stop offset=".720" stop-color="#5298ff"/><stop offset=".880" stop-color="#506cff"/><stop offset="1" stop-color="#5050ff"/></linearGradient>
 <linearGradient id="cy" gradientUnits="userSpaceOnUse" x1="500" y1="1110" x2="1230" y2="1500"><stop offset="0" stop-color="#10ffff"/><stop offset=".500" stop-color="#00fcff"/><stop offset=".680" stop-color="#00b8ff"/><stop offset=".850" stop-color="#0070ff"/><stop offset="1" stop-color="#0030ff"/></linearGradient>
 <linearGradient id="dk" gradientUnits="userSpaceOnUse" x1="520" y1="1240" x2="1200" y2="1520"><stop offset="0" stop-color="#0028ff"/><stop offset=".350" stop-color="#0050ff"/><stop offset=".700" stop-color="#0058ff"/><stop offset="1" stop-color="#0018ff"/></linearGradient>
 <linearGradient id="cb" x1="0" y1="0" x2="0" y2="1"><stop offset="0" stop-color="#f00"/><stop offset=".050" stop-color="#ff1800"/><stop offset=".200" stop-color="#ff9800"/><stop offset=".330" stop-color="#ff0"/><stop offset=".390" stop-color="#e0ff20"/><stop offset=".500" stop-color="#80ff80"/><stop offset=".660" stop-color="#00ffff"/><stop offset=".830" stop-color="#0080ff"/><stop offset="1" stop-color="#0000ff"/></linearGradient>
 ${blur('b0',55)}${blur('b1',36)}${blur('b2',20)}${blur('b3',7)}
 <clipPath id="cf"><path d="M203 124H473L494 1098L820 1247L1285 1515V1550H740L235 1305z"/></clipPath><clipPath id="ct"><path d="M494 1098L814 943L910 985L1133 1098L1355 1213L1547 1312V1385L1285 1515L820 1247z"/></clipPath></defs>
 <rect x="11" y="124" width="1537" height="1426" fill="url(#bg)"/>
 ${ln('M161 124L196 1337M165 269L206 252M185 954L226 937M909 124L911 985M1135 124L1133 1098M1370 124L1356 1215M812 222L1547 513M818 905L1547 1222M238 1408L525 1548M345 1458L448 1407M583 1548L645 1515')}
 <g clip-path="url(#cf)"><path d="M150 100H1300V1560H150z" fill="url(#fr)"/>
 <path d="M500 1100L1320 1480V1640H500z" fill="#0068ff" filter="url(#b2)"/>
 <ellipse cx="380" cy="1010" rx="110" ry="90" fill="#0090ff" filter="url(#b0)"/>
 <path d="M462 300L500 300V1010C480 960 470 860 462 760z" fill="#0004e8" filter="url(#b2)"/>
 <path d="M170 1310C380 1420 600 1530 760 1630" stroke="#00ffff" stroke-width="250" fill="none" filter="url(#b0)"/>
 <path d="M225 1310L740 1556" stroke="#00ffff" stroke-width="90" fill="none" filter="url(#b2)"/>
 <path d="M420 1400L700 1536" stroke="#58ffb0" stroke-width="34" fill="none" filter="url(#b2)"/>
 <path d="M500 1210C560 1310 680 1375 820 1430S1120 1520 1320 1570" stroke="url(#dk)" stroke-width="80" fill="none" filter="url(#b1)"/>
 <path d="M494 1180C500 1230 540 1280 620 1320" stroke="#0028ff" stroke-width="44" fill="none" filter="url(#b2)"/>
 <ellipse cx="300" cy="1150" rx="60" ry="45" fill="#0034ff" filter="url(#b1)"/>
 <path d="M494 1098L640 1190L820 1275L1240 1516" stroke="url(#cy)" stroke-width="112" fill="none" filter="url(#b2)"/>
 <path d="M494 1080L680 1170" stroke="#68ffb0" stroke-width="40" fill="none" filter="url(#b2)"/>
 <ellipse cx="420" cy="1060" rx="60" ry="62" fill="#00b4ff" filter="url(#b1)"/><path d="M400 1010L500 1095L450 1120z" fill="#10f4ff" filter="url(#b2)"/><ellipse cx="500" cy="1104" rx="28" ry="13" fill="#f0e040" filter="url(#b3)"/>
 <path d="M1180 1480L1300 1530V1590H1160z" fill="#0004ff" filter="url(#b1)"/></g>
 <path d="M473 124H809L814 943L494 1098z" fill="url(#cl)"/>
 <path d="M1285 1515L1547 1385V1550H1285z" fill="#0016b0"/>
 <g clip-path="url(#ct)"><path d="M480 900H1560V1560H480z" fill="url(#tp)"/><path d="M515 1098L822 950" stroke="#ff7058" stroke-width="16" filter="url(#b3)"/></g>
 <path d="M494 1098L814 943" stroke="#a01200" stroke-width="6"/>
 <path d="M1285 1458L1547 1323V1385L1285 1515z" fill="#5a4cff" opacity=".650"/>
 ${ln('M203 124L235 1305M473 124L494 1098V1390M809 124L814 943L1547 1266M494 1098L1285 1458L1547 1323M1285 1458V1548','#101018',2.4)}${ln('M235 1305L740 1548','#103040',2.4,'stroke-dasharray="6 4"')}
 <rect x="1386" y="280" width="36" height="1190" fill="url(#cb)" stroke="#333" stroke-width="2"/>
 ${tick.map(t=>ln(`M1386 ${t[1]}h8M1414 ${t[1]}h8`,'#222',2)+`<text x="1441" y="${t[1]+9}">${t[0]}</text>`).join('')}
 <text x="122" y="279">0</text><text x="38" y="480">m</text><text x="103" y="966">-0.5</text><text x="288" y="1501">-0.4</text>
 <text x="550" y="187" style="fill:#000040">表面: von Mises 应力</text><text x="825" y="187">(N/m<tspan dy="-11" font-size="19" style="font-size:19px">2</tspan><tspan dy="11">)</tspan></text>
 ${ln('M110 1448V1400','#4c9a60',5)}<path d="M102 1412L110 1388L118 1412z" fill="#4c9a60"/>${ln('M110 1448L76 1464','#5a7fae',5)}<path d="M64 1471L78 1455L86 1468z" fill="#5a7fae"/>${ln('M110 1448L146 1463','#c32a58',5)}<path d="M160 1470L138 1469L146 1454z" fill="#c32a58"/>
 <text x="103" y="1377">y</text><text x="44" y="1483">z</text><text x="165" y="1482">x</text>
 <path d="M834 805l10 13h-6v26h6l-10 13-10-13h6v-26h-6z" fill="#fff" stroke="#222" stroke-width="2"/>
 <rect x="1498" y="143" width="28" height="24" rx="6" fill="#e8f0f8" stroke="#5a7fae" stroke-width="3"/><rect x="1505" y="148" width="11" height="13" fill="#a8c8a0"/><rect x="1516" y="148" width="8" height="15" fill="#104a9a"/></svg>`;
});
define('graphics-panel',()=>{
 // each tool is listed with the centre it keeps along the bar
 const seq=[['zi',695.8],['zo',713.7],['zb',732.6],['v',747.7],['ze',765],['s',777.5],['ax',790.5],['v',805.6],['xy',823.8],['yz',841.7],['xz',859.6],['cyl',878],['s',891],['rot',902.4],['v',917],['s',929],['spk',941.3],['trans',959.5],['axa',978],['grid',996],['leg',1014],['ref',1032],['v',1047.6],['cam',1065.5],['prn',1083.7]];
 let right=684;
 const bar=seq.map(([n,c])=>{const w=n==='v'?6:n==='s'?1:13,m=c-w/2-right;right=c+w/2;
  return `<span style="margin-left:${m.toFixed(2)}px">${n==='v'?caret('#222'):n==='s'?'<div class="s"></div>':svg(n,13)}</span>`}).join('');
 return st(`:host{height:546px;border:1px solid #c4dbe8;border-bottom:0;background:#fbfaff}.b{height:17px;margin-top:-4px;display:flex;align-items:center}.b>*{flex:none}.s{width:1px;height:13px;background:#dcc8dc}plot-canvas{margin-top:1.500px;margin-left:0}`)+
 `<panel-title pad="6" c="#444" color="#4d84bb">图形</panel-title><div class="b">${bar}</div><plot-canvas></plot-canvas>`;
});
define('panel-tab',(e,a)=>st(`:host{height:20px;margin-left:${a('ml','0')}px;width:${a('w')}px;flex:none;font-size:10.300px;background:${a('on')?'#fff':'#eae9ec'};color:${a('on')?'#4a6a9c':'#222'};${a('on')?'border:1px solid #cdd5e4;border-bottom:1px solid #fff;margin-bottom:-1px;':''}}.r{height:100%;justify-content:space-between;padding:0 5px 0 ${a('pl','3')}px;white-space:nowrap}`)+
 `<div class="r"><slot></slot>${a('x')?'<svg width="8" height="8"><path d="M1 1l6 6M7 1L1 7" stroke="#c4c4cc"/></svg>':''}</div>`);
define('physics-panel',()=>{
 const T=[['0','acdc','AC/DC'],['0','snd','声学'],['0','chem','化学物质传递'],['0','elec','电化学'],['0','flow','流体流动'],['0','heat','传热'],['0','opt','光学'],['0','plas','等离子体'],['0','rf','射频'],['0','semi','半导体'],['0','solid','结构力学'],['0','math','数学']];
 const plus='<svg width="9" height="9" style="flex:none"><path d="M4.500 0v9M0 4.500h9" stroke="#b3b3b8" stroke-width="2"/></svg>';
 return st(`:host{width:290px;flex:none;height:546px;border:1px solid #d8d6e4;background:#fbfaff}.t{height:25px;display:flex;align-items:flex-end;border-bottom:1px solid #d3d3e0;padding-left:3px}.p{height:27px;font-size:9.600px;color:#77777c;padding-left:8px;gap:5px;white-space:nowrap}.p span+svg{margin-left:4px}.s{height:17px;margin-top:3px;padding-left:3px}.bt{width:48px;height:17px;margin-left:6px;border:1px solid #b9b9c0;background:#ececf0;font-size:9.600px;line-height:15px;text-align:center;flex:none}
 .tr{margin:4px 1px 0 3px;height:317px;border:1px solid #d3d3dc;background:#fff;padding-top:1.500px}.g{margin:5px 3px 0 4px;height:15px;gap:3px;font-size:9.500px;white-space:nowrap}.g i{height:1px;background:#d6d6de;flex:1}.g i:first-child{flex:0 0 7px}
 .tb{margin:4px 4px 0 3px;border:1px solid #d0d0d8;height:38px;font-size:9.500px;background:#f8f7fa}.h{display:flex;justify-content:space-between;height:21px;line-height:23px;padding:0 1px 0 3px;border-bottom:1px solid #ddd}.w{display:flex;height:15px;line-height:15px;background:#eceaee;padding-left:2px}.k{margin-left:auto;width:26px;background:#fff;border-left:1px solid #c8c8d0;display:flex;justify-content:center;padding-top:1.500px}`)+
 `<div class="t"><panel-tab w="63" x="1">添加材料</panel-tab><panel-tab ml="7" w="63" x="1">添加研究</panel-tab><panel-tab ml="6" w="75.500" x="1" on="1">添加物理场</panel-tab><span style="margin:0 3px 5.500px auto;display:flex;gap:7px">${caret('#c4c4cc')}<b style="width:4px;height:6px;background:#c4c4cc"></b></span></div>
 <div class="r p">${plus}<span>添加到“组件 2”</span>${plus}<span>添加到选择</span></div>
 <div class="r s"><text-box style="flex:0 0 230px"></text-box><div class="bt">搜索</div></div>
 <div class="tr"><tree-row level="1" open="1" icon="clock" pad="-16.500">最近使用</tree-row><tree-row level="2" open="" pad="-16.500" icon="solid">固体力学 (solid)</tree-row>${T.map(r=>`<tree-row level="1" pad="-16.500" open="${r[0]}" icon="${r[1]}">${r[2]}</tree-row>`).join('')}</div>
 <div class="r g"><i></i><span>研究中的物理场接口</span><i></i></div>
 <div class="tb"><div class="h"><span>研究</span><span>求解</span></div><div class="w"><span>研究 1</span><div class="k"><svg width="12" height="12"><rect x=".500" y=".500" width="10" height="10" fill="#fff" stroke="#777"/><path d="M2.500 5l2.500 3 4-6" fill="none" stroke="#4e8a3c" stroke-width="1.800"/></svg></div></div></div>
 <section-head mt="7">因变量</section-head>`;
});
define('log-panel',()=>{
 const sp=n=>' '.repeat(n);
 const L=[sp(3)+'1'+sp(8)+'0.62'+sp(3)+'1.0000000'+sp(8)+'0.62'+sp(4)+'1'+sp(4)+'1'+sp(4)+'1'+sp(2)+'6.6e-13'+sp(2)+'8.5e-12','求解时间：17 s。','物理内存: 1.86 GB','虚拟内存: 3.42 GB','结束时间：2020-4-11 20:52:32。','----- 研究 1/解 1 (sol1) 中的“稳态求解器 1” '+'-'.repeat(45)+'>','='.repeat(80)];
 return st(`:host{height:137px;margin-top:3px;border:1px solid #d3d7e6;background:#fbfaff}.t{height:25px;display:flex;align-items:flex-end;border-bottom:1px solid #d8d8e2;padding-left:4px}.i{height:23px;display:flex;align-items:center;gap:5.500px;padding:3px 0 0 6px}.b{margin:1px 3px 0;height:84px;border:1px solid #cfd3de;display:flex;background:#fcfbff;overflow:hidden}.l{flex:1;padding-left:2px;font-family:"Liberation Mono","Noto Sans CJK SC",monospace;font-size:9.250px;white-space:pre;color:#222;padding-top:0}.l div{height:11.800px;line-height:11.800px}`)+
 `<div class="t"><panel-tab w="25">进度</panel-tab><panel-tab ml="7" w="29" on="1" pl="3">日志</panel-tab><panel-tab ml="6" w="43" x="1" pl="3">表格</panel-tab><span style="margin:0 3px 5px auto;display:flex;gap:7px">${caret('#c4c4cc')}<b style="width:4px;height:6px;background:#c4c4cc"></b></span></div>
 <div class="i">${svg('lock',12)}${svg('broom',13)}${svg('outp',13)}</div><div class="b"><div class="l">${L.map(l=>`<div>${l.replace('>','&gt;')}</div>`).join('')}</div><scroll-bar size="6" off="47"></scroll-bar></div>`;
});
define('task-bar',()=>{
 const s=(b)=>`<svg width="18" height="18" viewBox="0 0 18 18">${b}</svg>`;
 const I=[s('<path d="M3 4l5-.800v5.300H3zM9 3l6-1v6.500H9zM3 9.500h5v5.300L3 14zM9 9.500h6V16l-6-1z" fill="#fff"/>'),
 s('<path d="M2 4.500h8M2 13.500h8M3 7h6v4H3zM13 3v5M13 10v5" stroke="#cfe0e4" stroke-width="1.400" fill="none"/>'),
 s('<path d="M1.500 2h15v14h-15z" fill="#fff200"/><path d="M9 16v-6h7.500l-4 6z" fill="#333a10"/>'),
 s('<path d="M13 1l4 2v12l-4 2-6-5-4 3-2-1V5l2-1 4 3zM13 5L9 9l4 4zM3 7v4l2-2z" fill="#8562c4" fill-rule="evenodd"/>'),
 s('<circle cx="9" cy="9" r="8" fill="#db4437"/><path d="M9 9L2 5A8 8 0 0 0 8 17z" fill="#0f9d58"/><path d="M9 9h8A8 8 0 0 1 8 17z" fill="#ffcd40"/><circle cx="9" cy="9" r="4" fill="#fff"/><circle cx="9" cy="9" r="3" fill="#4285f4"/>'),
 s('<rect y="2" width="18" height="14" fill="#0a0a0a"/><path d="M0 2.500h18" stroke="#ccc"/><path d="M2 6l2 2-2 2M6 9h6" stroke="#ddd" fill="none"/>'),
 s('<rect x="1" y="1" width="16" height="16" fill="#f5f2f2"/><path d="M4 14c4-4 5-8 5-11 0 4 2 8 6 9-4-1-7 0-11 2" stroke="#c61c20" stroke-width="1.300" fill="none"/>'),
 s('<path d="M1 3h6l1 2h9v11H1z" fill="#f4cc5c"/><path d="M4 16v-6h10v6h-3v-3H7v3z" fill="#4594d6"/>'),
 s('<circle cx="9" cy="9" r="8.500" fill="#241a40"/><ellipse cx="9" cy="8" rx="7" ry="2.500" fill="#8a62b8"/><ellipse cx="9" cy="8" rx="3" ry="1.500" fill="#fff"/>'),
 s('<rect width="18" height="18" rx="5" fill="#4a8cff"/><rect x="4" y="6" width="7" height="6" rx="1.500" fill="#fff"/><path d="M11.500 8.500l3-2v5l-3-2z" fill="#fff"/>'),
 s('<path d="M1 3l12-2 4 11-7 5-7-3z" fill="#d6e4ec"/><path d="M4 5h8l2 7-7 1z" fill="#1f5d95"/><path d="M7.500 6.500h4v4h-4z" fill="#b8d29a"/>'),
 s('<rect width="18" height="18" rx="2" fill="#b5b8b8"/><path d="M3 5l5 2v8l-5-3z" fill="#2a2a2a"/><path d="M8 7l5-2v8l-5 2z" fill="#c43a2a"/><path d="M3 5l5-2 5 2-5 2z" fill="#e9e3da"/><path d="M12 6h3v8h-3z" fill="#3a7a3a"/>'),
 s('<circle cx="9.500" cy="9" r="8" fill="#e0522c"/><path d="M9.500 1a8 8 0 0 1 8 8h-8z" fill="#f29270"/><rect x="0" y="5" width="8" height="8" fill="#b83818"/><path d="M3 11.500v-5h2a1.400 1.400 0 0 1 0 3H3" stroke="#fff" fill="none"/>')];
 return st(`:host{height:32px;background:#06414f;border-top:1px solid #0c5564}.r{height:31px;color:#fff}.b{width:38.850px;height:31px;display:flex;align-items:center;justify-content:center}.b svg{display:block}.u{box-shadow:inset 0 -2px #9adbe4;}.b.u{width:32px;margin:0 3.425px}.b.a{background:#177b91;width:38.850px;margin:0}.t{margin-left:auto;display:flex;align-items:center;font-size:12px;padding-right:19px}.d{font-size:9px;line-height:14px;text-align:center;width:50px;margin:0 13px 0 12px}`)+
 `<div class="r">${I.map((x,i)=>`<div class="b ${i>2?'u':''} ${i===10?'a':''}">${x}</div>`).join('')}<div class="t"><svg width="10" height="7"><path d="M1 6l4-4 4 4" fill="none" stroke="#fff"/></svg><span style="margin:0 11px 0 7px">英</span><svg width="14" height="13"><path d="M1.500 1.500h11v10h-11zM5 2v9M9 2v9M2 6h10" fill="none" stroke="#fff" stroke-width="1.200"/></svg><div class="d">20:52<br>2020/4/11</div><svg width="13" height="13"><path d="M1 1h11v8H8v3l-3-3H1z" fill="#fff"/><path d="M3 3.500h7M3 6h7" stroke="#06414f"/></svg></div></div>`;
});
define('comsol-desktop',()=>st(`:host{width:1520px;height:855.500px;background:#e8edf8;overflow:hidden}.m{height:686px;margin-top:3px;display:flex;padding-left:2px}.e{width:834px;display:flex;flex-direction:column;margin-left:4px}.u{display:flex}.u graphics-panel{width:541px;margin-right:3px;flex:none}.st{height:26px;background:#f2ecee;border-top:3px solid #fbfaff;font-size:9.600px;line-height:26px;color:#222;padding-left:982.500px;white-space:pre}`)+
 `<title-strip></title-strip><ribbon-bar></ribbon-bar><div class="m"><model-builder></model-builder><settings-panel style="margin-left:4px"></settings-panel><div class="e"><div class="u"><graphics-panel></graphics-panel><physics-panel></physics-panel></div><log-panel></log-panel></div></div><div class="st">981 MB | 2196 MB</div><task-bar></task-bar>`);

define('participant-row',(e,a)=>{
 const mic=`<svg width="20" height="20" viewBox="0 0 20 20" fill="none" stroke="#d63b47" stroke-width="1.250"><path d="M7 11V4.500a3 3 0 0 1 6 0V9a3 3 0 0 1-5 2.300M5 9c0 6 9.500 7 10 .500M10 14.500v4M7 18.500h6M1 19L19 1"/></svg>`;
 const live=`<svg width="20" height="20" viewBox="0 0 20 20" fill="none" stroke="#7d7d88" stroke-width="1.300"><rect x="7" y="1" width="6" height="12" rx="3"/><path d="M7 7h6v3a3 3 0 0 1-6 0z" fill="#8a8a94"/><path d="M4.500 9c0 7.500 11 7.500 11 0M10 15v3.500M7 18.500h6"/></svg>`;
 const cam=`<svg width="21" height="20" viewBox="0 0 21 20" fill="none" stroke="#d63b47" stroke-width="1.250"><path d="M3 15.500h-1.500v-11H13M14.500 6v9.500H7M14.500 9l5.500-4v10l-5.500-4M1 19L20 1"/></svg>`;
 const share=`<svg width="20" height="16"><rect width="20" height="16" rx="2.500" fill="#0ea32f"/><path d="M10 12V5M7 7.500L10 4.500l3 3" stroke="#fff" stroke-width="1.600" fill="none"/></svg>`;
 return st(`:host{height:51px;color:#333}.r{height:34px}.a{width:34px;height:34px;border-radius:8px;background:${a('c')};color:#fff;font-weight:600;font-size:${a('fs','18')}px;line-height:33px;text-align:center;flex:none}.n{margin-left:14.500px;font-size:16.500px;padding-top:1.500px;white-space:nowrap;color:#44444a}.i{margin-left:auto;margin-right:.500px;display:flex;align-items:center;gap:10px}svg{display:block;margin-top:2px}`)+
 `<div class="r"><div class="a">${a('t')}</div><div class="n"><slot></slot></div><div class="i">${a('live')?share+live:mic}${cam}</div></div>`;
});
define('chat-message',(e,a)=>st(`:host{margin-bottom:${a('mb','16.500')}px}.h{font-size:15.900px;line-height:20px;height:20px;display:flex;color:#747487;white-space:nowrap}.h b{font-weight:400;color:#0e62cf}.w{width:190px}.p{color:#e0525c;letter-spacing:1px}::slotted(div){font-size:17.900px;line-height:24px;height:24px;color:#303036;white-space:nowrap}`)+
 `<div class="h"><span class="w">${a('pre')}<b>${a('who')}</b>${a('post')}：</span>${a('priv')?'<span class="p">(私聊)</span>':''}</div><slot></slot>`);
define('side-panel',()=>{
 const chev=(c='#6e6e76',w=10)=>`<svg width="${w}" height="7" viewBox="0 0 10 7"><path d="M1 1.200l4 4 4-4" fill="none" stroke="${c}" stroke-width="1.700"/></svg>`;
 const mine='pre="我对" who="田佳铭的 iPhone" post="说" priv="1"', his='who="田佳铭的 iPhone" post="对我说" priv="1"';
 return st(`:host{width:400px;height:1001px;background:#fff}.hd{display:flex;align-items:center;height:62px;padding-left:25px;font-weight:600;color:#444}.hd span{flex:1;text-align:center;padding-right:37px}
 .q{margin:5.500px 10px 0 11px;height:35px;border-radius:14px;background:#e4e4e5;padding-left:13px;gap:6px;font-size:15.900px;color:#26262e}.pl{display:flex;height:322px;margin-top:12px}.l{flex:1;padding:6.500px 17px 0 23.500px;overflow:hidden}.sb{width:10px;margin-right:3px;border-radius:5px;background:#f1f1f6}.sb i{display:block;height:93px;border-radius:5px;background:#aeaeb6}
 .bt{display:flex;height:28.500px;margin-top:22px;padding-left:33px}.bt div{height:28.500px;border-radius:8px;background:#f1f1f7;font-size:15.900px;line-height:28px;text-align:center;color:#26262e}
 .ch{display:flex;height:323px}.c{flex:1;padding:3.500px 0 0 24px}.ft{border-top:2px solid #e9e9ec;margin-top:3px;padding:15px 19px 0 21px;font-size:15.900px;color:#333}`)+
 `<div class="hd" style="height:56.500px">${chev()}<span style="font-size:16.800px">参会者 (21)</span></div>
 <div class="r q"><svg width="16" height="16"><circle cx="6.500" cy="6.500" r="5.500" fill="none" stroke="#8a8a90" stroke-width="1.400"/><path d="M10.500 10.500l5 5" stroke="#8a8a90" stroke-width="1.400"/></svg><span>查找参会者</span></div>
 <div class="pl"><div class="l"><participant-row c="#8e44ad" t="上">上聪 罗 (主持人, 我)</participant-row><participant-row c="#34495e" t="泽" live="1">泽飞 孙</participant-row><participant-row c="#34495e" t="1" fs="16">14537</participant-row><participant-row c="#c0392b" t="H" fs="16">HP王向阳</participant-row><participant-row c="#27ae60" t="冯">冯敬超</participant-row><participant-row c="#16a085" t="豪">豪 冯</participant-row><participant-row c="#27ae60" t="">&nbsp;</participant-row></div><div class="sb"><i></i></div></div>
 <div class="bt"><div style="width:83px">全体静音</div><div style="width:115px;margin-left:32px">解除全体静音</div><div style="width:74px;margin-left:32px">更多 ${chev('#333',12)}</div></div>
 <div style="height:18px;border-bottom:1px solid #e6e6ea;margin-left:24px"></div>
 <div class="hd" style="height:56px;font-size:16.300px">${chev()}<span>Zoom 群聊</span></div>
 <div class="ch"><div class="c"><chat-message pre="我对" who="所有人" post="说" mb="18"><div>晚上好</div></chat-message><chat-message ${his} mb="18"><div>晚上好</div><div>我没听到声音，有人在说话吗</div></chat-message><chat-message ${mine} mb="18"><div>无</div></chat-message><chat-message ${his} mb="18"><div>哎，刚刚是私密......</div></chat-message><chat-message ${mine} mb="0"><div>是啊</div></chat-message></div><div class="sb"><i style="height:101px"></i></div></div>
 <div class="ft"><div class="r" style="height:30px"><span style="width:59px;white-space:nowrap">发给：</span><span style="width:80px;height:28px;background:#f1f1f7;border-radius:8px;font-size:15px;line-height:27px;padding-left:8px;color:#222;white-space:nowrap">天林 胡 ${chev('#222',9)}</span><span style="color:#e0525c;margin-left:18px;letter-spacing:1px">(私聊)</span><span style="margin-left:auto;width:30px;height:30px;border:1px solid #dcdce2;border-radius:8px;display:flex;align-items:center;justify-content:center"><svg width="13" height="3"><path d="M0 1.500h2M5.500 1.500h2M11 1.500h2" stroke="#555" stroke-width="2"/></svg></span></div><div style="margin-top:6px;line-height:24px;font-size:16.600px;color:#747480">输入消息...</div></div>`;
});
define('zoom-window',()=>st(`:host{width:1920px;height:1030px;background:#fff}.t{height:29px;display:flex;align-items:center;padding-left:3px;font-size:15.500px;color:#111;gap:6px}.w{margin-left:auto;display:flex;gap:47px;padding-right:25px}.m{display:flex}.k{width:1520px;height:1001px;background:#000;padding-top:73px;flex:none}`)+
 `<div class="t"><svg width="18" height="18" viewBox="0 0 18 18"><circle cx="9" cy="9" r="8.700" fill="#2d7cf6"/><rect x="4" y="6" width="7" height="6" rx="1.500" fill="#fff"/><path d="M11.500 8.500l3-2v5l-3-2z" fill="#fff"/></svg><span>Zoom</span>
 <div class="w"><svg width="12" height="12"><path d="M0 5.500h12" stroke="#000"/></svg><svg width="12" height="12"><path d="M.500 2.500h9v9h-9zM2.500 2V.500h9v9H10" stroke="#000" fill="none"/></svg><svg width="13" height="12"><path d="M.500.500l12 11M12.500.500l-12 11" stroke="#000"/></svg></div></div>
 <div class="m"><div class="k"><comsol-desktop></comsol-desktop></div><side-panel></side-panel></div>`);
</script>
</body>
</html>
